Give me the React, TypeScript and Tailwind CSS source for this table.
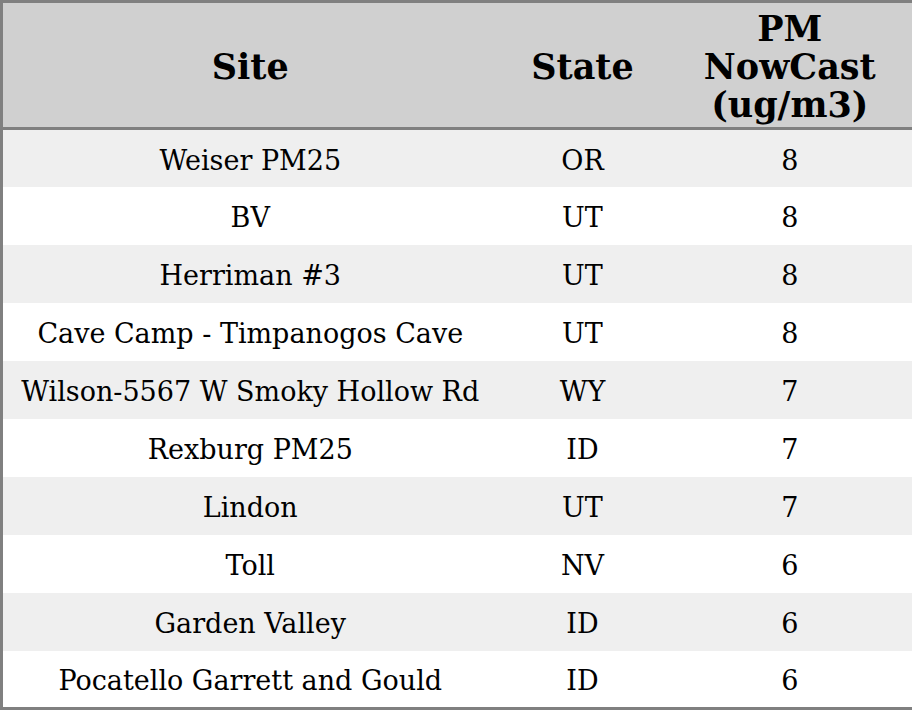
const rows: [string, string, number][] = [
  ["Weiser PM25", "OR", 8],
  ["BV", "UT", 8],
  ["Herriman #3", "UT", 8],
  ["Cave Camp - Timpanogos Cave", "UT", 8],
  ["Wilson-5567 W Smoky Hollow Rd", "WY", 7],
  ["Rexburg PM25", "ID", 7],
  ["Lindon", "UT", 7],
  ["Toll", "NV", 6],
  ["Garden Valley", "ID", 6],
  ["Pocatello Garrett and Gould", "ID", 6],
];

export default function App() {
  return (
    <div className="w-[912px] h-[711px] bg-white font-['DejaVu_Serif',serif] text-black">
      <table className="w-[912px] table-fixed border-collapse border-[3px] border-[#808080]">
        <colgroup>
          <col className="w-[496px]" />
          <col className="w-[170px]" />
          <col className="w-[246px]" />
        </colgroup>
        <thead>
          <tr className="h-[127px] bg-[#d0d0d0] border-b-[3px] border-[#808080] text-[35px] font-bold leading-[38px]">
            <th className="text-center p-0 pt-[4px]">Site</th>
            <th className="text-center p-0 pt-[4px]">State</th>
            <th className="text-center p-0 pt-[4px]">PM<br />NowCast<br />(ug/m3)</th>
          </tr>
        </thead>
        <tbody>
          {rows.map(([site, state, pm], i) => (
            <tr
              key={site}
              className={`h-[58px] text-[27px] ${i % 2 === 0 ? "bg-[#efefef]" : "bg-white"}`}
            >
              <td className="text-center p-0 pt-[5px] whitespace-nowrap">{site}</td>
              <td className="text-center p-0 pt-[5px]">{state}</td>
              <td className="text-center p-0 pt-[5px]">{pm}</td>
            </tr>
          ))}
        </tbody>
      </table>
    </div>
  );
}
